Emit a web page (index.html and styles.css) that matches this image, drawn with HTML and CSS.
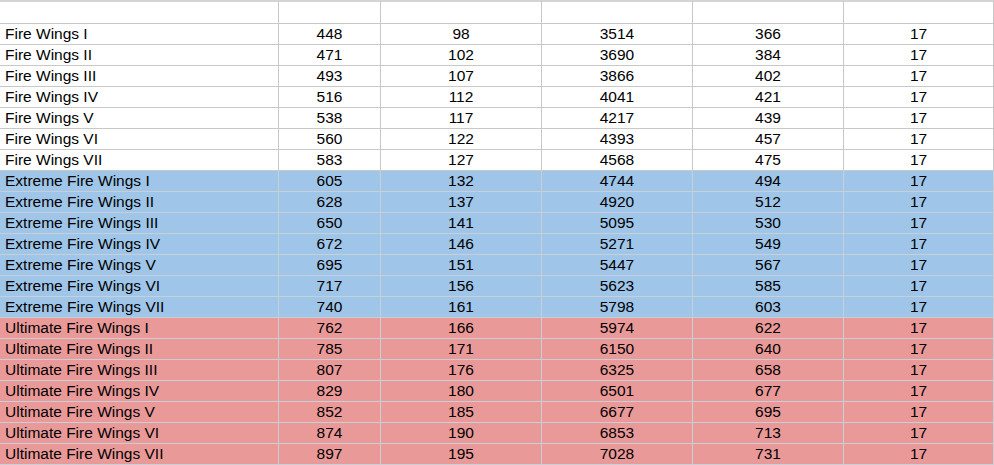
FILE: index.html
```html
<!DOCTYPE html>
<html>
<head>
<meta charset="utf-8">
<link rel="stylesheet" href="styles.css">
</head>
<body>
<div class="sheet">
  <div class="row head"><div class="c name"></div><div class="c"></div><div class="c"></div><div class="c"></div><div class="c"></div><div class="c"></div></div>
  <div class="row"><div class="c name">Fire Wings I</div><div class="c">448</div><div class="c">98</div><div class="c">3514</div><div class="c">366</div><div class="c">17</div></div>
  <div class="row"><div class="c name">Fire Wings II</div><div class="c">471</div><div class="c">102</div><div class="c">3690</div><div class="c">384</div><div class="c">17</div></div>
  <div class="row"><div class="c name">Fire Wings III</div><div class="c">493</div><div class="c">107</div><div class="c">3866</div><div class="c">402</div><div class="c">17</div></div>
  <div class="row"><div class="c name">Fire Wings IV</div><div class="c">516</div><div class="c">112</div><div class="c">4041</div><div class="c">421</div><div class="c">17</div></div>
  <div class="row"><div class="c name">Fire Wings V</div><div class="c">538</div><div class="c">117</div><div class="c">4217</div><div class="c">439</div><div class="c">17</div></div>
  <div class="row"><div class="c name">Fire Wings VI</div><div class="c">560</div><div class="c">122</div><div class="c">4393</div><div class="c">457</div><div class="c">17</div></div>
  <div class="row"><div class="c name">Fire Wings VII</div><div class="c">583</div><div class="c">127</div><div class="c">4568</div><div class="c">475</div><div class="c">17</div></div>
  <div class="row blue"><div class="c name">Extreme Fire Wings I</div><div class="c">605</div><div class="c">132</div><div class="c">4744</div><div class="c">494</div><div class="c">17</div></div>
  <div class="row blue"><div class="c name">Extreme Fire Wings II</div><div class="c">628</div><div class="c">137</div><div class="c">4920</div><div class="c">512</div><div class="c">17</div></div>
  <div class="row blue"><div class="c name">Extreme Fire Wings III</div><div class="c">650</div><div class="c">141</div><div class="c">5095</div><div class="c">530</div><div class="c">17</div></div>
  <div class="row blue"><div class="c name">Extreme Fire Wings IV</div><div class="c">672</div><div class="c">146</div><div class="c">5271</div><div class="c">549</div><div class="c">17</div></div>
  <div class="row blue"><div class="c name">Extreme Fire Wings V</div><div class="c">695</div><div class="c">151</div><div class="c">5447</div><div class="c">567</div><div class="c">17</div></div>
  <div class="row blue"><div class="c name">Extreme Fire Wings VI</div><div class="c">717</div><div class="c">156</div><div class="c">5623</div><div class="c">585</div><div class="c">17</div></div>
  <div class="row blue"><div class="c name">Extreme Fire Wings VII</div><div class="c">740</div><div class="c">161</div><div class="c">5798</div><div class="c">603</div><div class="c">17</div></div>
  <div class="row red"><div class="c name">Ultimate Fire Wings I</div><div class="c">762</div><div class="c">166</div><div class="c">5974</div><div class="c">622</div><div class="c">17</div></div>
  <div class="row red"><div class="c name">Ultimate Fire Wings II</div><div class="c">785</div><div class="c">171</div><div class="c">6150</div><div class="c">640</div><div class="c">17</div></div>
  <div class="row red"><div class="c name">Ultimate Fire Wings III</div><div class="c">807</div><div class="c">176</div><div class="c">6325</div><div class="c">658</div><div class="c">17</div></div>
  <div class="row red"><div class="c name">Ultimate Fire Wings IV</div><div class="c">829</div><div class="c">180</div><div class="c">6501</div><div class="c">677</div><div class="c">17</div></div>
  <div class="row red"><div class="c name">Ultimate Fire Wings V</div><div class="c">852</div><div class="c">185</div><div class="c">6677</div><div class="c">695</div><div class="c">17</div></div>
  <div class="row red"><div class="c name">Ultimate Fire Wings VI</div><div class="c">874</div><div class="c">190</div><div class="c">6853</div><div class="c">713</div><div class="c">17</div></div>
  <div class="row red"><div class="c name">Ultimate Fire Wings VII</div><div class="c">897</div><div class="c">195</div><div class="c">7028</div><div class="c">731</div><div class="c">17</div></div>
</div>
</body>
</html>
```

FILE: styles.css
```css
html, body {
  margin: 0;
  padding: 0;
  background: #ffffff;
}
.sheet {
  width: 994px;
  font-family: "Liberation Sans", Arial, sans-serif;
  font-size: 15.5px;
  color: #000;
}
.row {
  display: grid;
  grid-template-columns: 279px 102px 161px 151px 151px 150px;
  height: 21px;
}
.row.head {
  height: 24px;
}
.row.head .c {
  border-top: 2px solid #d4d4d4;
}
.c {
  box-sizing: border-box;
  border-right: 1px solid #c8c8c8;
  border-bottom: 1px solid #c8c8c8;
  line-height: 20px;
  text-align: center;
  white-space: nowrap;
  overflow: hidden;
}
.c.name {
  text-align: left;
  padding-left: 5px;
}
.row.blue {
  background: #9fc5e8;
}
.row.red {
  background: #ea9999;
}
.row.blue .c, .row.red .c {
  border-color: #c9cfd6;
}
```
